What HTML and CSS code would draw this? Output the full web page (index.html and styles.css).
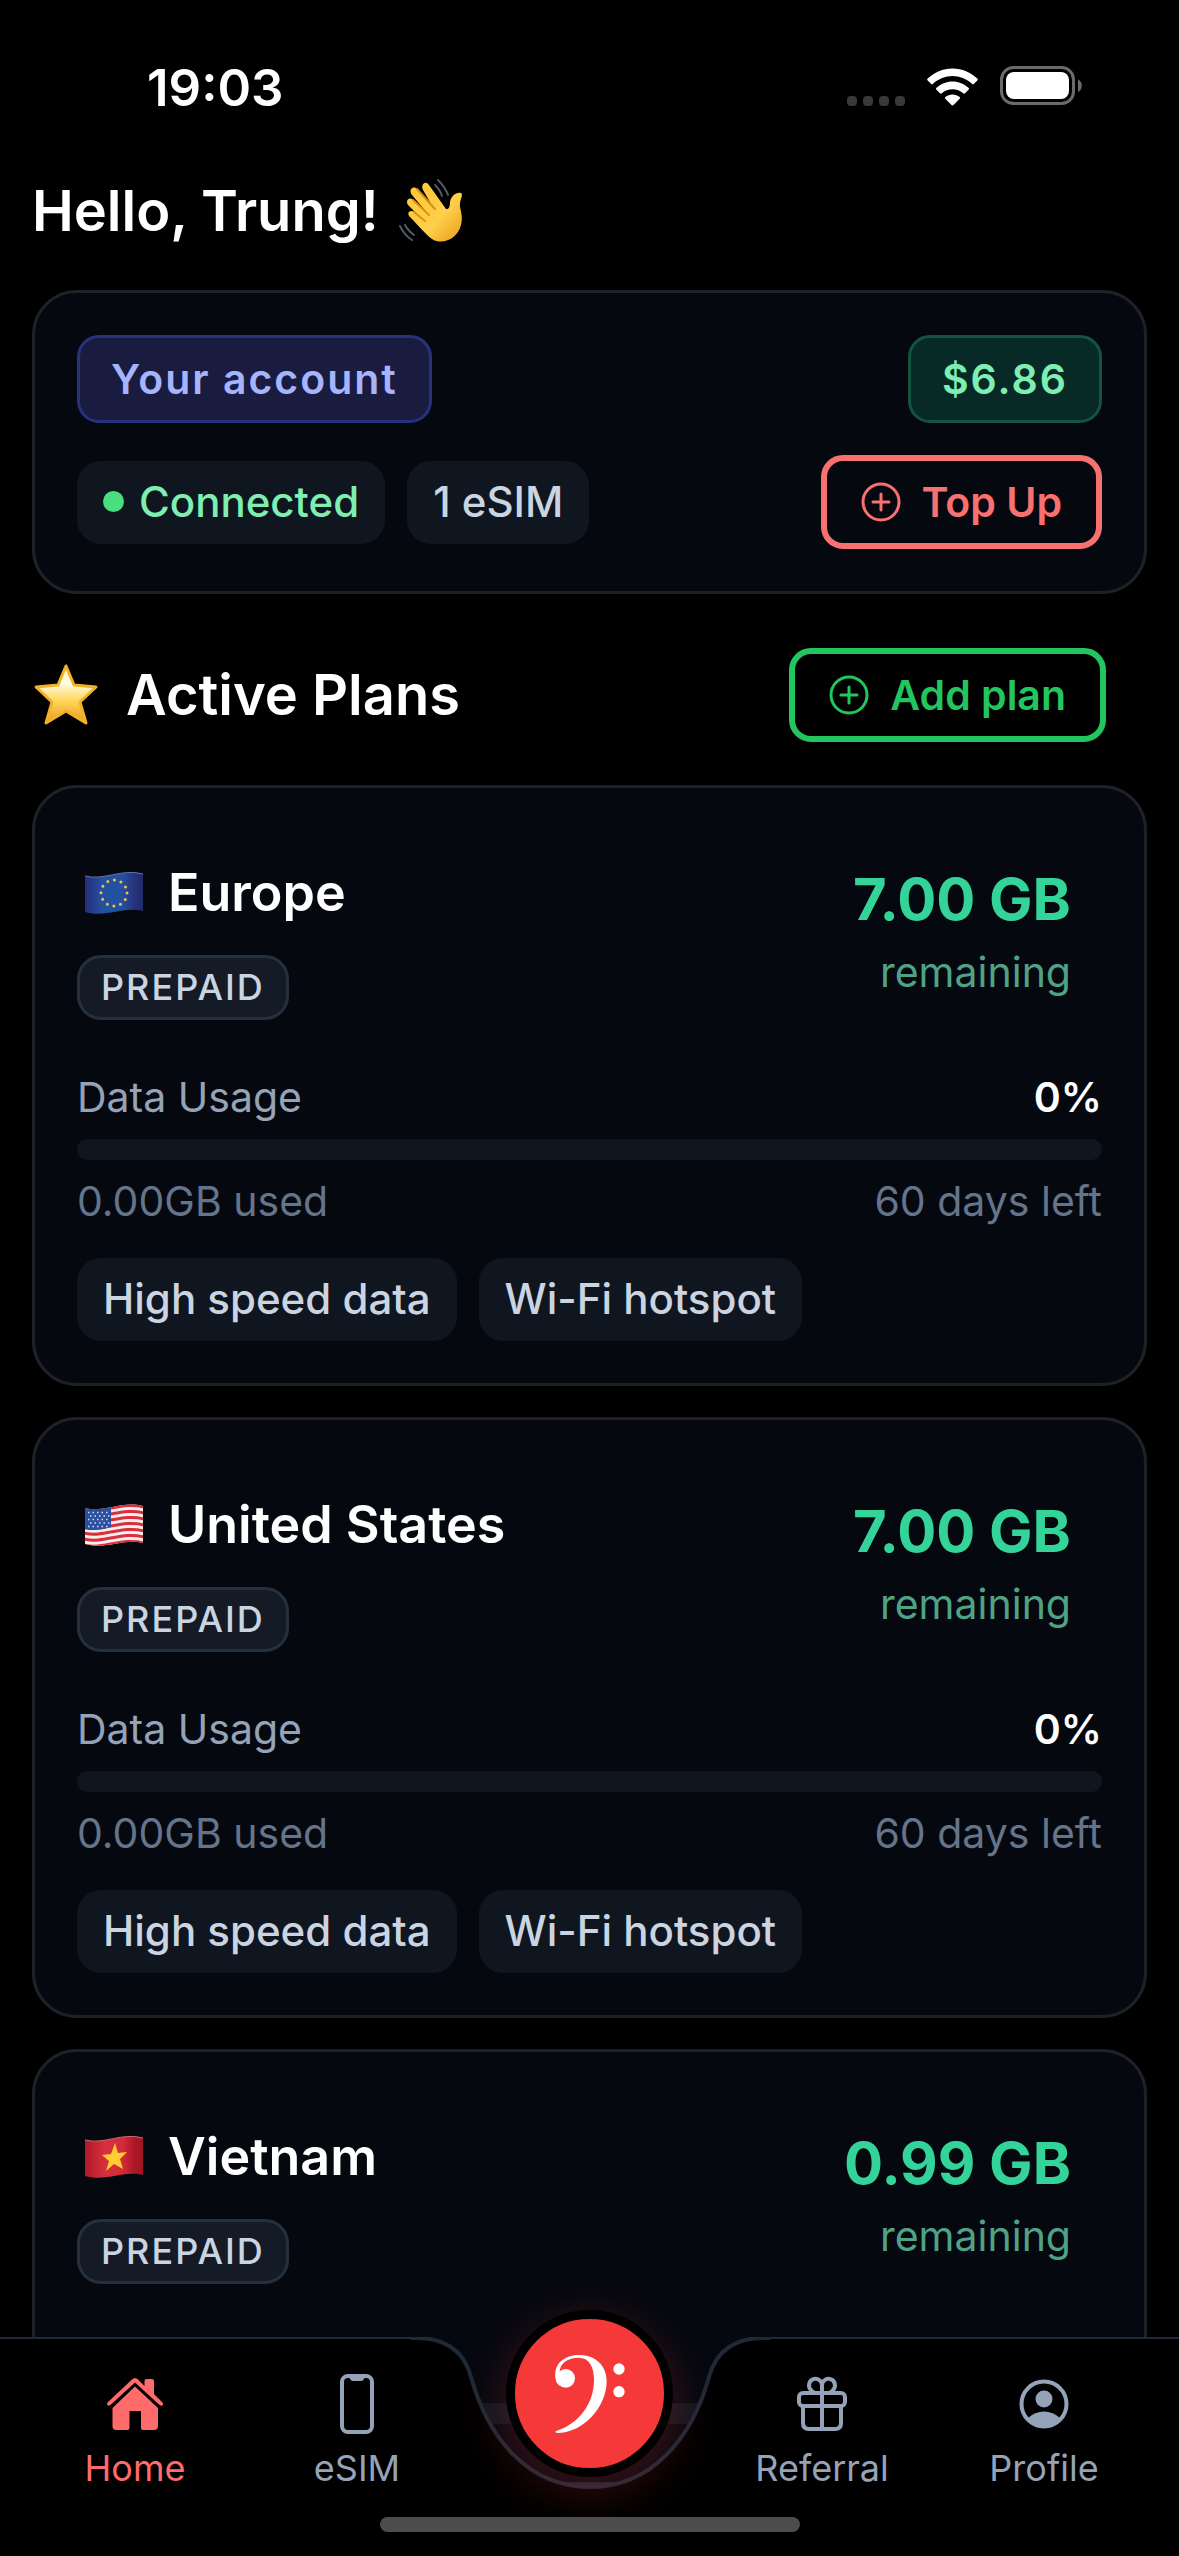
FILE: index.html
```html
<!DOCTYPE html>
<html lang="en">
<head>
  <meta charset="UTF-8">
  <meta name="viewport" content="width=device-width, initial-scale=1">
  <title>Home</title>
  <link rel="stylesheet" href="styles.css">
</head>
<body>
  <svg class="defs" aria-hidden="true">
    <symbol id="icon-plus" viewBox="0 0 40 40">
      <g fill="none" stroke="currentColor" stroke-linecap="round">
        <circle cx="20" cy="20" r="18" stroke-width="3"/>
        <path d="M20 12v16M12 20h16" stroke-width="3"/>
      </g>
    </symbol>
  </svg>

  <div class="app">
    <div class="status-bar">
      <span class="time">19:03</span>
      <div class="status-icons">
        <svg width="58" height="10" viewBox="0 0 58 10" fill="#38383c">
          <rect width="10" height="10" rx="4"/>
          <rect x="16" width="10" height="10" rx="4"/>
          <rect x="32" width="10" height="10" rx="4"/>
          <rect x="48" width="10" height="10" rx="4"/>
        </svg>
        <svg class="wifi" width="51" height="38" viewBox="0 0 51 38" fill="#fff">
          <path d="M25.500 0.500C35 .5 44 4.500 50.300 10.600C51 11.300 51 11.800 50.300 12.500L47 15.800C46.300 16.500 45.800 16.400 45.200 15.900C39.500 10.800 32.600 8 25.500 8S11.500 10.800 5.800 15.900C5.200 16.400 4.700 16.500 4 15.800L.7 12.500C0 11.800 0 11.300.7 10.600C7 4.500 16 .5 25.500.5Z"/>
          <path d="M25.500 13.500C31.500 13.500 37.200 15.900 41.500 19.800C42.200 20.500 42.200 21 41.500 21.700L38 25.200C37.400 25.800 36.900 25.800 36.200 25.200C33.300 22.700 29.500 21.200 25.500 21.200S17.700 22.700 14.800 25.200C14.100 25.800 13.600 25.800 13 25.200L9.500 21.700C8.800 21 8.800 20.500 9.500 19.800C13.800 15.900 19.500 13.500 25.500 13.500Z"/>
          <path d="M25.500 26.500C28.200 26.500 30.700 27.500 32.600 29.100C33.300 29.700 33.300 30.200 32.700 30.800L26.500 37C25.800 37.600 25.200 37.600 24.500 37L18.300 30.800C17.700 30.200 17.700 29.700 18.400 29.100C20.300 27.500 22.800 26.500 25.500 26.500Z"/>
        </svg>
        <svg class="battery" width="83" height="40" viewBox="0 0 83 40">
          <rect x="1.500" y="1.500" width="72" height="36" rx="12" fill="none" stroke="#6b6b6e" stroke-width="3"/>
          <rect x="6" y="6" width="63" height="27" rx="8" fill="#fff"/>
          <path d="M78 13.500c5 2 5 10.500 0 12.500z" fill="#6b6b6e"/>
        </svg>
      </div>
    </div>

    <main class="content">
      <h1 class="greeting">
        Hello, Trung!
        <svg width="66" height="66" viewBox="0 0 66 66" role="img" aria-label="waving hand">
          <defs>
            <linearGradient id="hand" x1="0" y1="0" x2="1" y2="1">
              <stop offset="0" stop-color="#ffc62e"/>
              <stop offset=".6" stop-color="#ffcf4a"/>
              <stop offset="1" stop-color="#e79b16"/>
            </linearGradient>
          </defs>
          <path d="M33 61C28 58 18 46 11 39C7 35 11 31 15 34L24 42L9 27C6 23 10 18 14 22L29 36L13 17C9 12 14 7 18 11L35 31L24 12C21 6 27 2 30 7L47 31C50 32 51 28 51 24C52 18 57 14 62 15C65 17 60 22 61 29C62 34 64 39 62 47C59 60 44 68 33 61Z" fill="url(#hand)"/>
          <path d="M15 34L26 43M14 22L30 37M18 11L36 31" stroke="#dc9218" stroke-width="2" stroke-linecap="round" fill="none"/>
          <path d="M39 2C43 6 47 11 49 17M36 7C40 11 42 14 43 18M1 48C4 54 8 59 13 62M6 47C8 51 11 54 15 57" stroke="#525866" stroke-width="2" stroke-linecap="round" fill="none"/>
        </svg>
      </h1>

      <section class="card account">
        <div class="row">
          <span class="badge badge-account">Your account</span>
          <span class="badge badge-balance">$6.86</span>
        </div>
        <div class="row">
          <div class="chips">
            <span class="chip chip-connected"><i class="dot"></i>Connected</span>
            <span class="chip">1 eSIM</span>
          </div>
          <button type="button" class="btn btn-topup"><svg width="40" height="40"><use href="#icon-plus"/></svg>Top Up</button>
        </div>
      </section>

      <div class="section-head">
        <h2>
          <svg width="66" height="66" viewBox="0 0 66 66" role="img" aria-label="star">
            <defs>
              <linearGradient id="star" x1="0" y1="0" x2="0" y2="1">
                <stop offset="0" stop-color="#fff6c4"/>
                <stop offset=".3" stop-color="#fffbe6"/>
                <stop offset=".6" stop-color="#ffd85c"/>
                <stop offset="1" stop-color="#e99a1b"/>
              </linearGradient>
            </defs>
            <path d="M34 4L42 23L64 25L48 40L54 61L34 49L14 61L20 40L4 25L26 23Z" fill="url(#star)" stroke="#f3b128" stroke-width="3" stroke-linejoin="round"/>
          </svg>
          Active Plans
        </h2>
        <button type="button" class="btn btn-add"><svg width="40" height="40"><use href="#icon-plus"/></svg>Add plan</button>
      </div>

      <div class="plans">
        <article class="card">
          <div class="plan-head">
            <div class="plan-name">
              <h3>
                <svg class="flag" width="60" height="44" viewBox="0 0 60 44" role="img" aria-label="EU flag">
                  <defs>
                    <linearGradient id="eu">
                      <stop offset="0" stop-color="#262f78"/>
                      <stop offset=".3" stop-color="#2450a0"/>
                      <stop offset=".65" stop-color="#2450a0"/>
                      <stop offset=".85" stop-color="#27327c"/>
                      <stop offset="1" stop-color="#202a68"/>
                    </linearGradient>
                  </defs>
                  <path d="M1 5C20 10 38-3 59 3V40C40 35 22 47 1 41Z" fill="url(#eu)"/>
                  <path d="M1 5C20 10 38-3 59 3" stroke="#6674a4" fill="none"/>
                  <circle cx="30" cy="22" r="13" fill="none" stroke="#f2c14e" stroke-width="3" stroke-linecap="round" stroke-dasharray="0 6.807"/>
                </svg>
                Europe
              </h3>
              <span class="tag">PREPAID</span>
            </div>
            <div class="remaining">
              <strong>7.00 GB</strong>
              <span>remaining</span>
            </div>
          </div>
          <div class="row usage"><span>Data Usage</span><b>0%</b></div>
          <div class="bar"></div>
          <div class="row usage-detail"><span>0.00GB used</span><span>60 days left</span></div>
          <div class="chips">
            <span class="chip">High speed data</span>
            <span class="chip">Wi-Fi hotspot</span>
          </div>
        </article>

        <article class="card">
          <div class="plan-head">
            <div class="plan-name">
              <h3>
                <svg class="flag" width="60" height="44" viewBox="0 0 60 44" role="img" aria-label="US flag">
                  <defs>
                    <clipPath id="us"><path d="M1 5C20 10 38-3 59 3V40C40 35 22 47 1 41Z"/></clipPath>
                  </defs>
                  <g clip-path="url(#us)">
                    <rect width="60" height="44" fill="#f1eef0"/>
                    <path d="M0 6C20 11 38-2 60 4M0 12C20 17 38 4 60 10M0 18C20 23 38 10 60 16M0 24C20 29 38 16 60 22M0 30C20 35 38 22 60 28M0 36C20 41 38 28 60 34M0 42C20 47 38 34 60 40" stroke="#dc2f3c" stroke-width="3" fill="none"/>
                    <path d="M0 3C10 7 19 6 27 3V24C18 27 9 28 0 26Z" fill="#2c50a0"/>
                    <path d="M4 9.500H26M6 13H26M4 16.500H26M6 20H26M4 23.500H26" stroke="#d4dcf2" stroke-width="1.500" stroke-dasharray="1.500 3"/>
                  </g>
                </svg>
                United States
              </h3>
              <span class="tag">PREPAID</span>
            </div>
            <div class="remaining">
              <strong>7.00 GB</strong>
              <span>remaining</span>
            </div>
          </div>
          <div class="row usage"><span>Data Usage</span><b>0%</b></div>
          <div class="bar"></div>
          <div class="row usage-detail"><span>0.00GB used</span><span>60 days left</span></div>
          <div class="chips">
            <span class="chip">High speed data</span>
            <span class="chip">Wi-Fi hotspot</span>
          </div>
        </article>

        <article class="card">
          <div class="plan-head">
            <div class="plan-name">
              <h3>
                <svg class="flag" width="60" height="44" viewBox="0 0 60 44" role="img" aria-label="Vietnam flag">
                  <defs>
                    <linearGradient id="vn">
                      <stop offset="0" stop-color="#b01a28"/>
                      <stop offset=".35" stop-color="#d62f3d"/>
                      <stop offset=".65" stop-color="#d22b39"/>
                      <stop offset=".85" stop-color="#ac1826"/>
                      <stop offset="1" stop-color="#a01522"/>
                    </linearGradient>
                  </defs>
                  <path d="M1 5C20 10 38-3 59 3V40C40 35 22 47 1 41Z" fill="url(#vn)"/>
                  <path d="M1 5C20 10 38-3 59 3" stroke="#cf6a72" fill="none"/>
                  <path d="M31 8L34 18L43 17L36 24L39 34L30 29L22 36L25 26L18 20L27 19Z" fill="#ffcc33"/>
                </svg>
                Vietnam
              </h3>
              <span class="tag">PREPAID</span>
            </div>
            <div class="remaining">
              <strong>0.99 GB</strong>
              <span>remaining</span>
            </div>
          </div>
          <div class="row usage"></div>
          <div class="bar"></div>
        </article>
      </div>
    </main>

    <nav class="tabbar">
      <div class="tabbar-bg">
        <div class="side"></div>
        <svg width="360" height="219" viewBox="0 0 360 219">
          <path d="M0 1H6C36 1 54 14 61 40C78 101 118 150 180 150S282 101 299 40C306 14 324 1 354 1H360V219H0Z" fill="#000"/>
          <path d="M0 1H6C36 1 54 14 61 40C78 101 118 150 180 150S282 101 299 40C306 14 324 1 354 1H360" fill="none" stroke="#1f2937" stroke-width="4"/>
        </svg>
        <div class="side"></div>
      </div>

      <div class="tabs">
        <a href="#" class="tab active">
          <svg width="60" height="60" viewBox="0 0 60 60" fill="currentColor">
            <path d="M27 5.500Q30 2.500 33 5.500L39.500 12V7Q39.500 5 41.500 5H47Q49 5 49 7V20L57.500 28.500Q59 30.500 57 31.500Q55.500 32 54 30.500L30 8.500L6 30.500Q4.500 32 3 31.500Q1 30 2.500 28.500Z"/>
            <path d="M30 12.500L53 34V52Q53 56 49 56H38Q36 56 36 54V37H24.500V54Q24.500 56 22.500 56H11Q7.500 56 7.500 52V34Z"/>
          </svg>
          Home
        </a>
        <a href="#" class="tab">
          <svg width="60" height="60" viewBox="0 0 60 60">
            <rect x="15" y="2" width="30" height="56" rx="6" fill="none" stroke="currentColor" stroke-width="4"/>
            <path d="M21 2H39V3Q37 3.500 37 5Q36 7 34 7H26Q24 7 23 5Q23 3.500 21 3Z" fill="currentColor"/>
          </svg>
          eSIM
        </a>
        <a href="#" class="call" aria-label="Dial">
          <svg width="150" height="150" viewBox="285 147 450 450" fill="#fff">
            <path d="M407 326C399 285 430 255 477 255C525 255 560 285 560 333C560 412 490 486 417 489C405 489 403 483 411 482C472 463 522 405 522 330C522 290 508 263 475 263C441 263 418 283 419 307Z"/>
            <circle cx="437" cy="325" r="28"/>
            <path d="M407 318Q405 340 420 347L424 305Z"/>
            <circle cx="597" cy="297" r="17"/>
            <circle cx="597" cy="365" r="17"/>
          </svg>
        </a>
        <a href="#" class="tab">
          <svg width="60" height="60" viewBox="0 0 60 60" fill="none" stroke="currentColor" stroke-width="4">
            <rect x="7" y="19" width="46" height="13" rx="4"/>
            <path d="M11 32V49Q11 55 17 55H43Q49 55 49 49V32M30 10V55"/>
            <path d="M30 18V12A6.500 6.500 0 1 0 19 16Q20.500 18.500 23 18.500M30 18V12A6.500 6.500 0 1 1 41 16Q39.500 18.500 37 18.500"/>
          </svg>
          Referral
        </a>
        <a href="#" class="tab">
          <svg width="60" height="60" viewBox="0 0 60 60">
            <circle cx="30" cy="30" r="22.500" fill="none" stroke="currentColor" stroke-width="4"/>
            <circle cx="30" cy="25" r="8.500" fill="currentColor"/>
            <path d="M14 44Q21 37.500 30 37.500T46 44Q39 53 30 53T14 44Z" fill="currentColor"/>
          </svg>
          Profile
        </a>
      </div>
      <div class="home-indicator"></div>
    </nav>
  </div>
</body>
</html>
```

FILE: styles.css
```css
* {
  box-sizing: border-box;
}
body {
  margin: 0;
  background: #000;
  color: #fff;
  font-family: Inter, "Liberation Sans", sans-serif;
  font-size: 41px;
  line-height: 50px;
}
h1, h2, h3 {
  margin: 0;
  font-weight: 600;
}
svg {
  display: block;
  flex: none;
}
.defs {
  display: none;
}
.app {
  position: relative;
  height: 100vh;
  overflow: hidden;
}

/* status bar */
.status-bar {
  display: flex;
  justify-content: space-between;
  height: 175px;
  padding: 63px 96px 0 147px;
}
.time {
  font-size: 51px;
  font-weight: 600;
}
.status-icons {
  display: flex;
  align-items: flex-end;
  height: 43px;
}
.status-icons .wifi {
  margin: 0 22px 0 22px;
}

/* content */
.content {
  padding: 0 32px;
}
.greeting {
  display: flex;
  align-items: center;
  gap: 20px;
  margin-bottom: 43px;
  font-size: 56px;
  line-height: 72px;
}
.card {
  padding: 42px;
  background: #05080f;
  border: 3px solid #1e2128;
  border-radius: 45px;
}
.row {
  display: flex;
  justify-content: space-between;
  align-items: center;
}
.account .row + .row {
  margin-top: 32px;
}
.badge {
  padding: 16px 31px;
  border: 3px solid;
  border-radius: 22px;
  font-weight: 600;
  letter-spacing: 2px;
}
.badge-account {
  background: #1a1c3f;
  border-color: #28327c;
  color: #a5b4fc;
}
.badge-balance {
  background: #082a27;
  border-color: #14533f;
  color: #7eeeb2;
}
.chips {
  display: flex;
  gap: 22px;
}
.chip {
  display: flex;
  align-items: center;
  gap: 15px;
  padding: 16px 26px 17px;
  background: #101620;
  border-radius: 24px;
  color: #cbd5e1;
  font-size: 42px;
  font-weight: 500;
}
.chip-connected {
  color: #7eeeb2;
}
.dot {
  width: 21px;
  height: 21px;
  border-radius: 50%;
  background: #4ade80;
}
.btn {
  display: flex;
  align-items: center;
  gap: 21px;
  padding: 16px 34px;
  background: transparent;
  border: 6px solid;
  border-radius: 22px;
  font: inherit;
  font-weight: 600;
  cursor: pointer;
}
.btn-topup {
  color: #f87171;
}
.btn-add {
  color: #22c55e;
}
.section-head {
  display: flex;
  justify-content: space-between;
  align-items: center;
  margin: 54px 41px 43px 0;
}
.section-head h2 {
  display: flex;
  align-items: center;
  gap: 28px;
  font-size: 56px;
  line-height: 72px;
}

/* plans */
.plans {
  display: flex;
  flex-direction: column;
  gap: 31px;
}
.plan-head {
  display: flex;
  justify-content: space-between;
  margin-bottom: 42px;
}
.plan-name {
  display: flex;
  flex-direction: column;
  align-items: flex-start;
  gap: 29px;
  padding-top: 30px;
}
.plan-name h3 {
  display: flex;
  align-items: center;
  gap: 24px;
  padding-left: 7px;
  font-size: 52px;
  line-height: 66px;
}
.tag {
  padding: 9px 21px 10px;
  background: #141b27;
  border: 3px solid #25303e;
  border-radius: 24px;
  color: #cbd5e1;
  font-size: 36px;
  font-weight: 500;
  line-height: 40px;
  letter-spacing: 2px;
}
.remaining {
  display: flex;
  flex-direction: column;
  gap: 12px;
  padding: 33px 31px;
  text-align: right;
  color: #50a284;
}
.remaining strong {
  color: #34d399;
  font-size: 58px;
  font-weight: 700;
  line-height: 72px;
}
.usage {
  min-height: 50px;
  color: #94a3b8;
}
.usage b {
  color: #fff;
  font-weight: 600;
}
.bar {
  height: 21px;
  margin: 17px 0 16px;
  background: #101620;
  border-radius: 12px;
}
.usage-detail {
  margin-bottom: 32px;
  color: #64748b;
}

/* tab bar */
.tabbar {
  position: absolute;
  left: 0;
  right: 0;
  bottom: 0;
  height: 219px;
}
.tabbar-bg {
  display: grid;
  grid-template-columns: 1fr 360px 1fr;
  height: 100%;
}
.side {
  background: #000;
  border-top: 2px solid #1f2937;
}
.tabs {
  position: absolute;
  top: 0;
  left: 0;
  right: 0;
  display: flex;
  padding: 0 24px;
}
.tab {
  flex: 1;
  display: flex;
  flex-direction: column;
  align-items: center;
  gap: 12px;
  padding-top: 37px;
  color: #94a3b8;
  font-size: 36px;
  line-height: 44px;
  text-decoration: none;
}
.tab.active {
  color: #ff6b6b;
}
.call {
  width: 167px;
  height: 167px;
  margin: -27px 38px 0;
  border: 9px solid #000;
  border-radius: 50%;
  background: #f53838;
  box-shadow: 0 12px 48px rgba(245, 56, 56, .25);
}
.home-indicator {
  position: absolute;
  left: 50%;
  bottom: 24px;
  width: 420px;
  height: 15px;
  margin-left: -210px;
  border-radius: 8px;
  background: #4b4c4b;
}
```
